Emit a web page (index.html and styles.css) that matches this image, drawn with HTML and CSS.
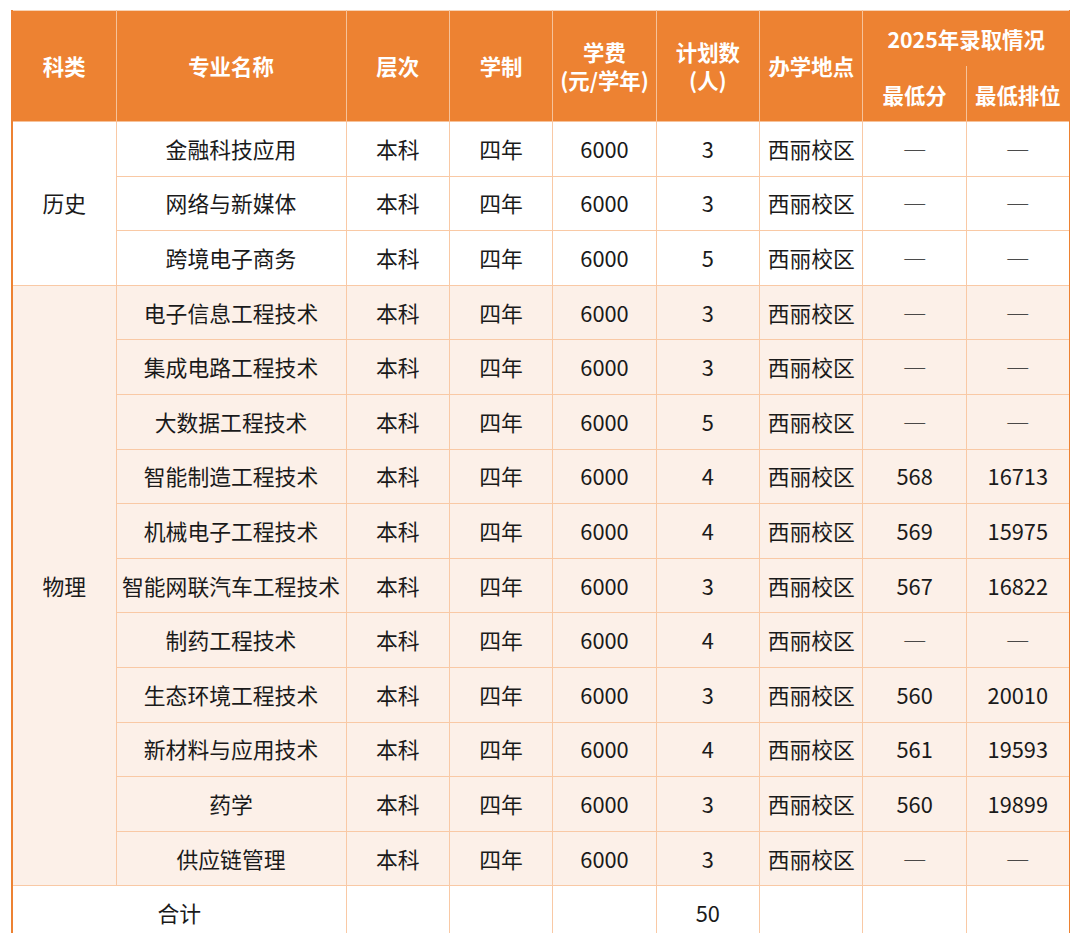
FILE: index.html
```html
<!DOCTYPE html>
<html lang="zh">
<head>
<meta charset="utf-8">
<title>2025年录取情况</title>
<link rel="stylesheet" href="styles.css">
</head>
<body>
<div class="frame">
<table class="plan">
  <colgroup>
    <col class="c-type"><col class="c-name"><col class="c-n"><col class="c-n"><col class="c-n"><col class="c-n"><col class="c-n"><col class="c-n"><col class="c-n">
  </colgroup>
  <thead>
    <tr class="h1">
      <th rowspan="2">科类</th>
      <th rowspan="2">专业名称</th>
      <th rowspan="2">层次</th>
      <th rowspan="2">学制</th>
      <th rowspan="2">学费<br>(元/学年)</th>
      <th rowspan="2">计划数<br>(人)</th>
      <th rowspan="2">办学地点</th>
      <th colspan="2" class="grp">2025年录取情况</th>
    </tr>
    <tr class="h2">
      <th class="sub">最低分</th>
      <th class="sub">最低排位</th>
    </tr>
  </thead>
  <tbody class="hist">
    <tr><td rowspan="3" class="type">历史</td><td>金融科技应用</td><td>本科</td><td>四年</td><td>6000</td><td>3</td><td>西丽校区</td><td class="na">─</td><td class="na">─</td></tr>
    <tr><td>网络与新媒体</td><td>本科</td><td>四年</td><td>6000</td><td>3</td><td>西丽校区</td><td class="na">─</td><td class="na">─</td></tr>
    <tr><td>跨境电子商务</td><td>本科</td><td>四年</td><td>6000</td><td>5</td><td>西丽校区</td><td class="na">─</td><td class="na">─</td></tr>
  </tbody>
  <tbody class="phys">
    <tr><td rowspan="11" class="type">物理</td><td>电子信息工程技术</td><td>本科</td><td>四年</td><td>6000</td><td>3</td><td>西丽校区</td><td class="na">─</td><td class="na">─</td></tr>
    <tr><td>集成电路工程技术</td><td>本科</td><td>四年</td><td>6000</td><td>3</td><td>西丽校区</td><td class="na">─</td><td class="na">─</td></tr>
    <tr><td>大数据工程技术</td><td>本科</td><td>四年</td><td>6000</td><td>5</td><td>西丽校区</td><td class="na">─</td><td class="na">─</td></tr>
    <tr><td>智能制造工程技术</td><td>本科</td><td>四年</td><td>6000</td><td>4</td><td>西丽校区</td><td>568</td><td>16713</td></tr>
    <tr><td>机械电子工程技术</td><td>本科</td><td>四年</td><td>6000</td><td>4</td><td>西丽校区</td><td>569</td><td>15975</td></tr>
    <tr><td>智能网联汽车工程技术</td><td>本科</td><td>四年</td><td>6000</td><td>3</td><td>西丽校区</td><td>567</td><td>16822</td></tr>
    <tr><td>制药工程技术</td><td>本科</td><td>四年</td><td>6000</td><td>4</td><td>西丽校区</td><td class="na">─</td><td class="na">─</td></tr>
    <tr><td>生态环境工程技术</td><td>本科</td><td>四年</td><td>6000</td><td>3</td><td>西丽校区</td><td>560</td><td>20010</td></tr>
    <tr><td>新材料与应用技术</td><td>本科</td><td>四年</td><td>6000</td><td>4</td><td>西丽校区</td><td>561</td><td>19593</td></tr>
    <tr><td>药学</td><td>本科</td><td>四年</td><td>6000</td><td>3</td><td>西丽校区</td><td>560</td><td>19899</td></tr>
    <tr><td>供应链管理</td><td>本科</td><td>四年</td><td>6000</td><td>3</td><td>西丽校区</td><td class="na">─</td><td class="na">─</td></tr>
  </tbody>
  <tbody class="total">
    <tr><td colspan="2">合计</td><td></td><td></td><td></td><td>50</td><td></td><td></td><td></td></tr>
  </tbody>
</table>
</div>
</body>
</html>
```

FILE: styles.css
```css
html, body {
  margin: 0;
  padding: 0;
  background: #ffffff;
}

body {
  padding: 10px 0 0 11px;
  font-family: "Noto Sans CJK SC", "Noto Sans", sans-serif;
  color: #1a1a1a;
}

.frame {
  width: 1059px;
  height: 923px;
  overflow: hidden;
}

.plan {
  border-collapse: collapse;
  table-layout: fixed;
  width: 1058px;
  font-size: 21.8px;
  border-left: 2px solid #ed8232;
  border-right: 2px solid #ed8232;
}

.c-type { width: 104px; }
.c-name { width: 230px; }
.c-n { width: 103.4px; }

.plan th,
.plan td {
  text-align: center;
  vertical-align: middle;
  padding: 0;
  border: 1px solid #f9c9a5;
  white-space: nowrap;
}

.plan thead th {
  background: #ed8232;
  color: #ffffff;
  font-weight: 700;
  font-size: 21.4px;
  line-height: 28px;
  border-color: #f6c29a;
  border-top: 1px solid #f7d3b6;
}

.plan thead .h1 th { height: 52px; }
.plan thead .h2 th { height: 53px; }

.plan thead th.grp {
  border-bottom-color: #ed8232;
  padding-top: 2px;
}

.plan thead th.sub {
  border-top-color: #ed8232;
  padding-top: 2px;
}

.plan tbody td {
  height: 53.6px;
  line-height: 28px;
}

.plan tbody td.na {
  color: #222222;
  font-size: 21px;
  font-weight: 700;
}

.hist td { background: #ffffff; }
.phys td { background: #fcf0e8; }
.total td { background: #ffffff; }

.hist td.type { background: #ffffff; }
.phys td.type { background: #fcf0e8; }
```
